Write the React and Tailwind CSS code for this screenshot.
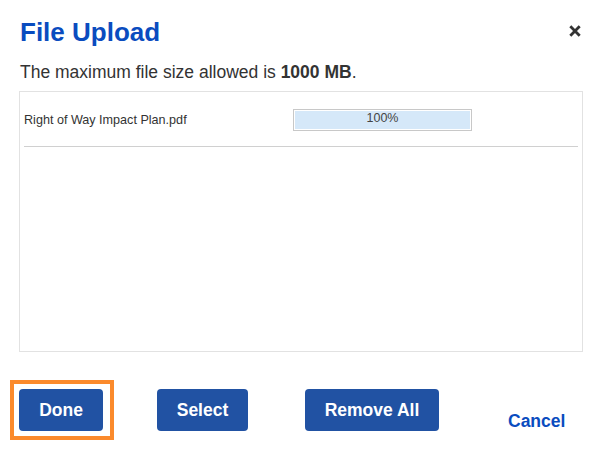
export default function App() {
  return (
    <div className="w-[602px] h-[465px] bg-white font-['Liberation_Sans',Arial,sans-serif] text-[#333]">
      <div className="flex items-start justify-between pl-5 pr-[21px] pt-[17px]">
        <h2 className="text-[26px] leading-[30px] font-bold text-[#0a4cbf]">File Upload</h2>
        <button className="mt-[8px] w-3 h-3 flex items-center justify-center" aria-label="Close">
          <svg width="12" height="12" viewBox="0 0 12 12">
            <path d="M1.3 1.3 L10.7 10.7 M10.7 1.3 L1.3 10.7" stroke="#333" strokeWidth="2.8" strokeLinecap="butt" />
          </svg>
        </button>
      </div>
      <p className="mt-[15px] pl-5 text-[17.5px] leading-5 text-[#333]">
        The maximum file size allowed is <span className="font-bold">1000 MB</span>.
      </p>
      <div className="mt-[9px] mx-[19px] h-[261px] border border-[#e2e2e2]">
        <div className="flex items-center pt-[17px] pl-[4px]">
          <div className="w-[269px] text-[12.6px] leading-[22px] text-[#333]">Right of Way Impact Plan.pdf</div>
          <div className="w-[179px] h-[22px] border border-[#c8c8c8] p-[1px] bg-white">
            <div className="h-full bg-[#d5e8f9] flex justify-center text-[12.5px] leading-[15px] text-[#444]">100%</div>
          </div>
        </div>
        <div className="mt-[15px] mx-[4px] border-t border-[#d0d0d0]"></div>
      </div>
      <div className="flex items-end pl-[19px] mt-[37px]">
        <div className="-ml-[9px] -mt-[9px] -mb-[9px] -mr-[11px] border-4 border-[#fb8a2c] pl-[5px] pt-[5px] pb-[5px] pr-[7px]">
          <button className="block w-[84px] h-[42px] rounded-[4px] bg-[#2152a3] text-white text-[17.5px] font-bold">Done</button>
        </div>
        <button className="ml-[54px] w-[91px] h-[42px] rounded-[4px] bg-[#2152a3] text-white text-[17.5px] font-bold">Select</button>
        <button className="ml-[57px] w-[134px] h-[42px] rounded-[4px] bg-[#2152a3] text-white text-[17.5px] font-bold">Remove All</button>
        <button className="ml-[69px] text-[17.5px] leading-5 font-bold text-[#0a4cbf]">Cancel</button>
      </div>
    </div>
  );
}
